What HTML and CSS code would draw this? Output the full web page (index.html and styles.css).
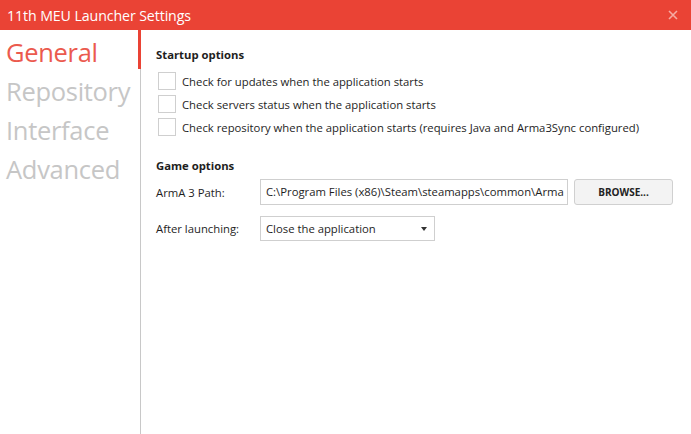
FILE: index.html
```html
<!DOCTYPE html>
<html>
<head>
<meta charset="utf-8">
<link rel="stylesheet" href="styles.css">
</head>
<body>
<div class="window">
  <div class="titlebar">
    <span class="title">11th MEU Launcher Settings</span>
    <svg class="close" width="10" height="10" viewBox="0 0 10 10"><path d="M1 1L9 9M9 1L1 9" stroke="#f6aaa3" stroke-width="1.6"/></svg>
  </div>
  <div class="main">
    <nav class="nav">
      <div class="nav-item active">General</div>
      <div class="nav-item">Repository</div>
      <div class="nav-item">Interface</div>
      <div class="nav-item">Advanced</div>
    </nav>
    <div class="divider"><div class="accent"></div></div>
    <section class="content">
      <h2 class="section-title">Startup options</h2>
      <div class="checks">
        <label class="check"><span class="box"></span>Check for updates when the application starts</label>
        <label class="check"><span class="box"></span>Check servers status when the application starts</label>
        <label class="check"><span class="box"></span>Check repository when the application starts (requires Java and Arma3Sync configured)</label>
      </div>
      <h2 class="section-title game">Game options</h2>
      <div class="row">
        <span class="label">ArmA 3 Path:</span>
        <div class="input">C:\Program Files (x86)\Steam\steamapps\common\Arma</div>
        <button class="btn">BROWSE...</button>
      </div>
      <div class="row row2">
        <span class="label">After launching:</span>
        <div class="select"><span>Close the application</span><span class="arrow"></span></div>
      </div>
    </section>
  </div>
</div>
</body>
</html>
```
FILE: styles.css
```css
html, body { margin: 0; padding: 0; background: #fff; }
body { font-family: "Open Sans", "Noto Sans", sans-serif; color: #1e1e1e; }
.window { width: 691px; height: 434px; display: flex; flex-direction: column; overflow: hidden; }
.titlebar { height: 30px; background: #ea4335; display: flex; align-items: center; justify-content: space-between; padding: 0 13px 0 7px; flex-shrink: 0; }
.title { color: #fff; font-size: 14.2px; letter-spacing: -0.1px; }
.close { display: block; margin-top: -1px; }
.main { flex: 1; display: flex; }
.nav { width: 138px; padding-top: 3px; }
.nav-item { font-size: 25.5px; line-height: 39px; padding-left: 6px; color: #c6c6c6; letter-spacing: -0.3px; font-weight: 400; }
.nav-item.active { color: #eb5a4e; }
.divider { width: 3px; position: relative; display: flex; justify-content: flex-end; }
.divider::after { content: ""; width: 1px; background: #c8c8c8; }
.accent { position: absolute; left: 0; top: 0; width: 3px; height: 39px; background: #ea4335; }
.content { flex: 1; padding: 17px 0 0 15px; font-size: 11.3px; }
.section-title { font-size: 11.3px; font-weight: 700; margin: 0 0 9px; line-height: 16px; }
.section-title.game { margin-top: 22px; margin-bottom: 5px; }
.checks { display: flex; flex-direction: column; gap: 5px; padding-left: 2px; }
.check { display: flex; align-items: center; height: 18px; }
.box { width: 16px; height: 16px; border: 1px solid #cfcfcf; margin-right: 6px; background: #fff; }
.row { display: flex; align-items: center; }
.label { width: 104px; }
.input { width: 296px; height: 24px; border: 1px solid #cfcfcf; padding: 0 5px; line-height: 24px; white-space: nowrap; overflow: hidden; box-sizing: content-box; }
.btn { margin-left: 6px; width: 99px; height: 26px; border: 1px solid #d0d0d0; border-radius: 3px; background: #f3f3f3; font-family: inherit; font-size: 10px; font-weight: 700; color: #222; }
.row2 { margin-top: 11px; }
.select { width: 163px; height: 23px; border: 1px solid #cfcfcf; padding: 0 5px; display: flex; align-items: center; justify-content: space-between; }
.arrow { width: 0; height: 0; border-left: 3px solid transparent; border-right: 3px solid transparent; border-top: 4px solid #333; margin-right: 2px; }
```
